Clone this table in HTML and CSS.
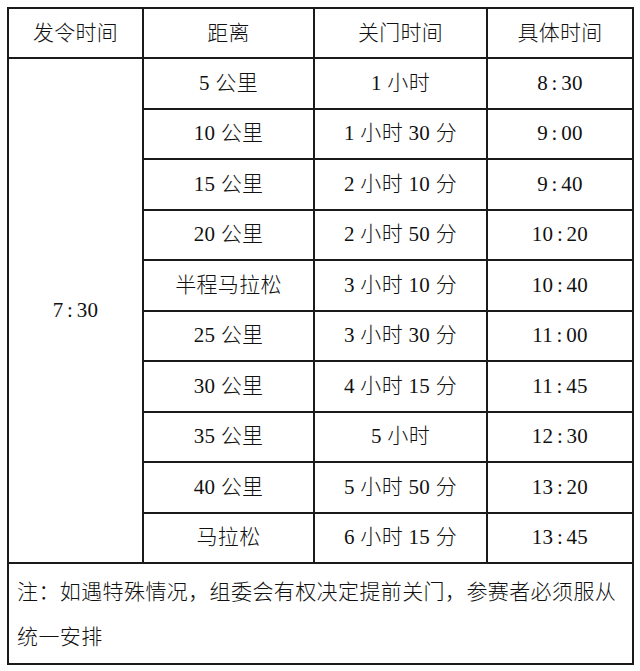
FILE: index.html
```html
<!DOCTYPE html>
<html lang="zh-CN">
<head>
<meta charset="utf-8">
<link rel="stylesheet" href="styles.css">
</head>
<body>
<table class="sched">
  <colgroup>
    <col class="c1"><col class="c2"><col class="c3"><col class="c4">
  </colgroup>
  <tr class="head">
    <td>发令时间</td><td>距离</td><td>关门时间</td><td>具体时间</td>
  </tr>
  <tr><td rowspan="10">7<span class="colon">:</span>30</td><td>5 公里</td><td>1 小时</td><td>8<span class="colon">:</span>30</td></tr>
  <tr><td>10 公里</td><td>1 小时 30 分</td><td>9<span class="colon">:</span>00</td></tr>
  <tr><td>15 公里</td><td>2 小时 10 分</td><td>9<span class="colon">:</span>40</td></tr>
  <tr><td>20 公里</td><td>2 小时 50 分</td><td>10<span class="colon">:</span>20</td></tr>
  <tr><td>半程马拉松</td><td>3 小时 10 分</td><td>10<span class="colon">:</span>40</td></tr>
  <tr><td>25 公里</td><td>3 小时 30 分</td><td>11<span class="colon">:</span>00</td></tr>
  <tr><td>30 公里</td><td>4 小时 15 分</td><td>11<span class="colon">:</span>45</td></tr>
  <tr><td>35 公里</td><td>5 小时</td><td>12<span class="colon">:</span>30</td></tr>
  <tr><td>40 公里</td><td>5 小时 50 分</td><td>13<span class="colon">:</span>20</td></tr>
  <tr><td>马拉松</td><td>6 小时 15 分</td><td>13<span class="colon">:</span>45</td></tr>
  <tr class="note"><td colspan="4">注：如遇特殊情况，组委会有权决定提前关门，参赛者必须服从<br>统一安排</td></tr>
</table>
</body>
</html>
```
FILE: styles.css
```css
html, body {
  margin: 0;
  padding: 0;
  background: #ffffff;
}
body {
  padding: 7px 0 0 7px;
}
.sched {
  border-collapse: collapse;
  table-layout: fixed;
  width: 625px;
  font-family: "Liberation Serif", "Noto Sans CJK SC", serif;
  font-size: 21px;
  font-weight: 300;
  color: #111111;
}
.c1 { width: 135px; }
.c2 { width: 171px; }
.c3 { width: 173px; }
.c4 { width: 146px; }
.sched td {
  border: 2px solid #1a1a1a;
  text-align: center;
  vertical-align: middle;
  padding: 0;
  height: 48.5px;
  letter-spacing: 0.3px;
  line-height: 1;
}
.sched .head td {
  height: 48px;
}
.colon {
  padding: 0 3.5px;
}
.sched .note td {
  text-align: left;
  height: 96px;
  padding: 3px 8px 0 8px;
  line-height: 45px;
  letter-spacing: 0.4px;
}
```
